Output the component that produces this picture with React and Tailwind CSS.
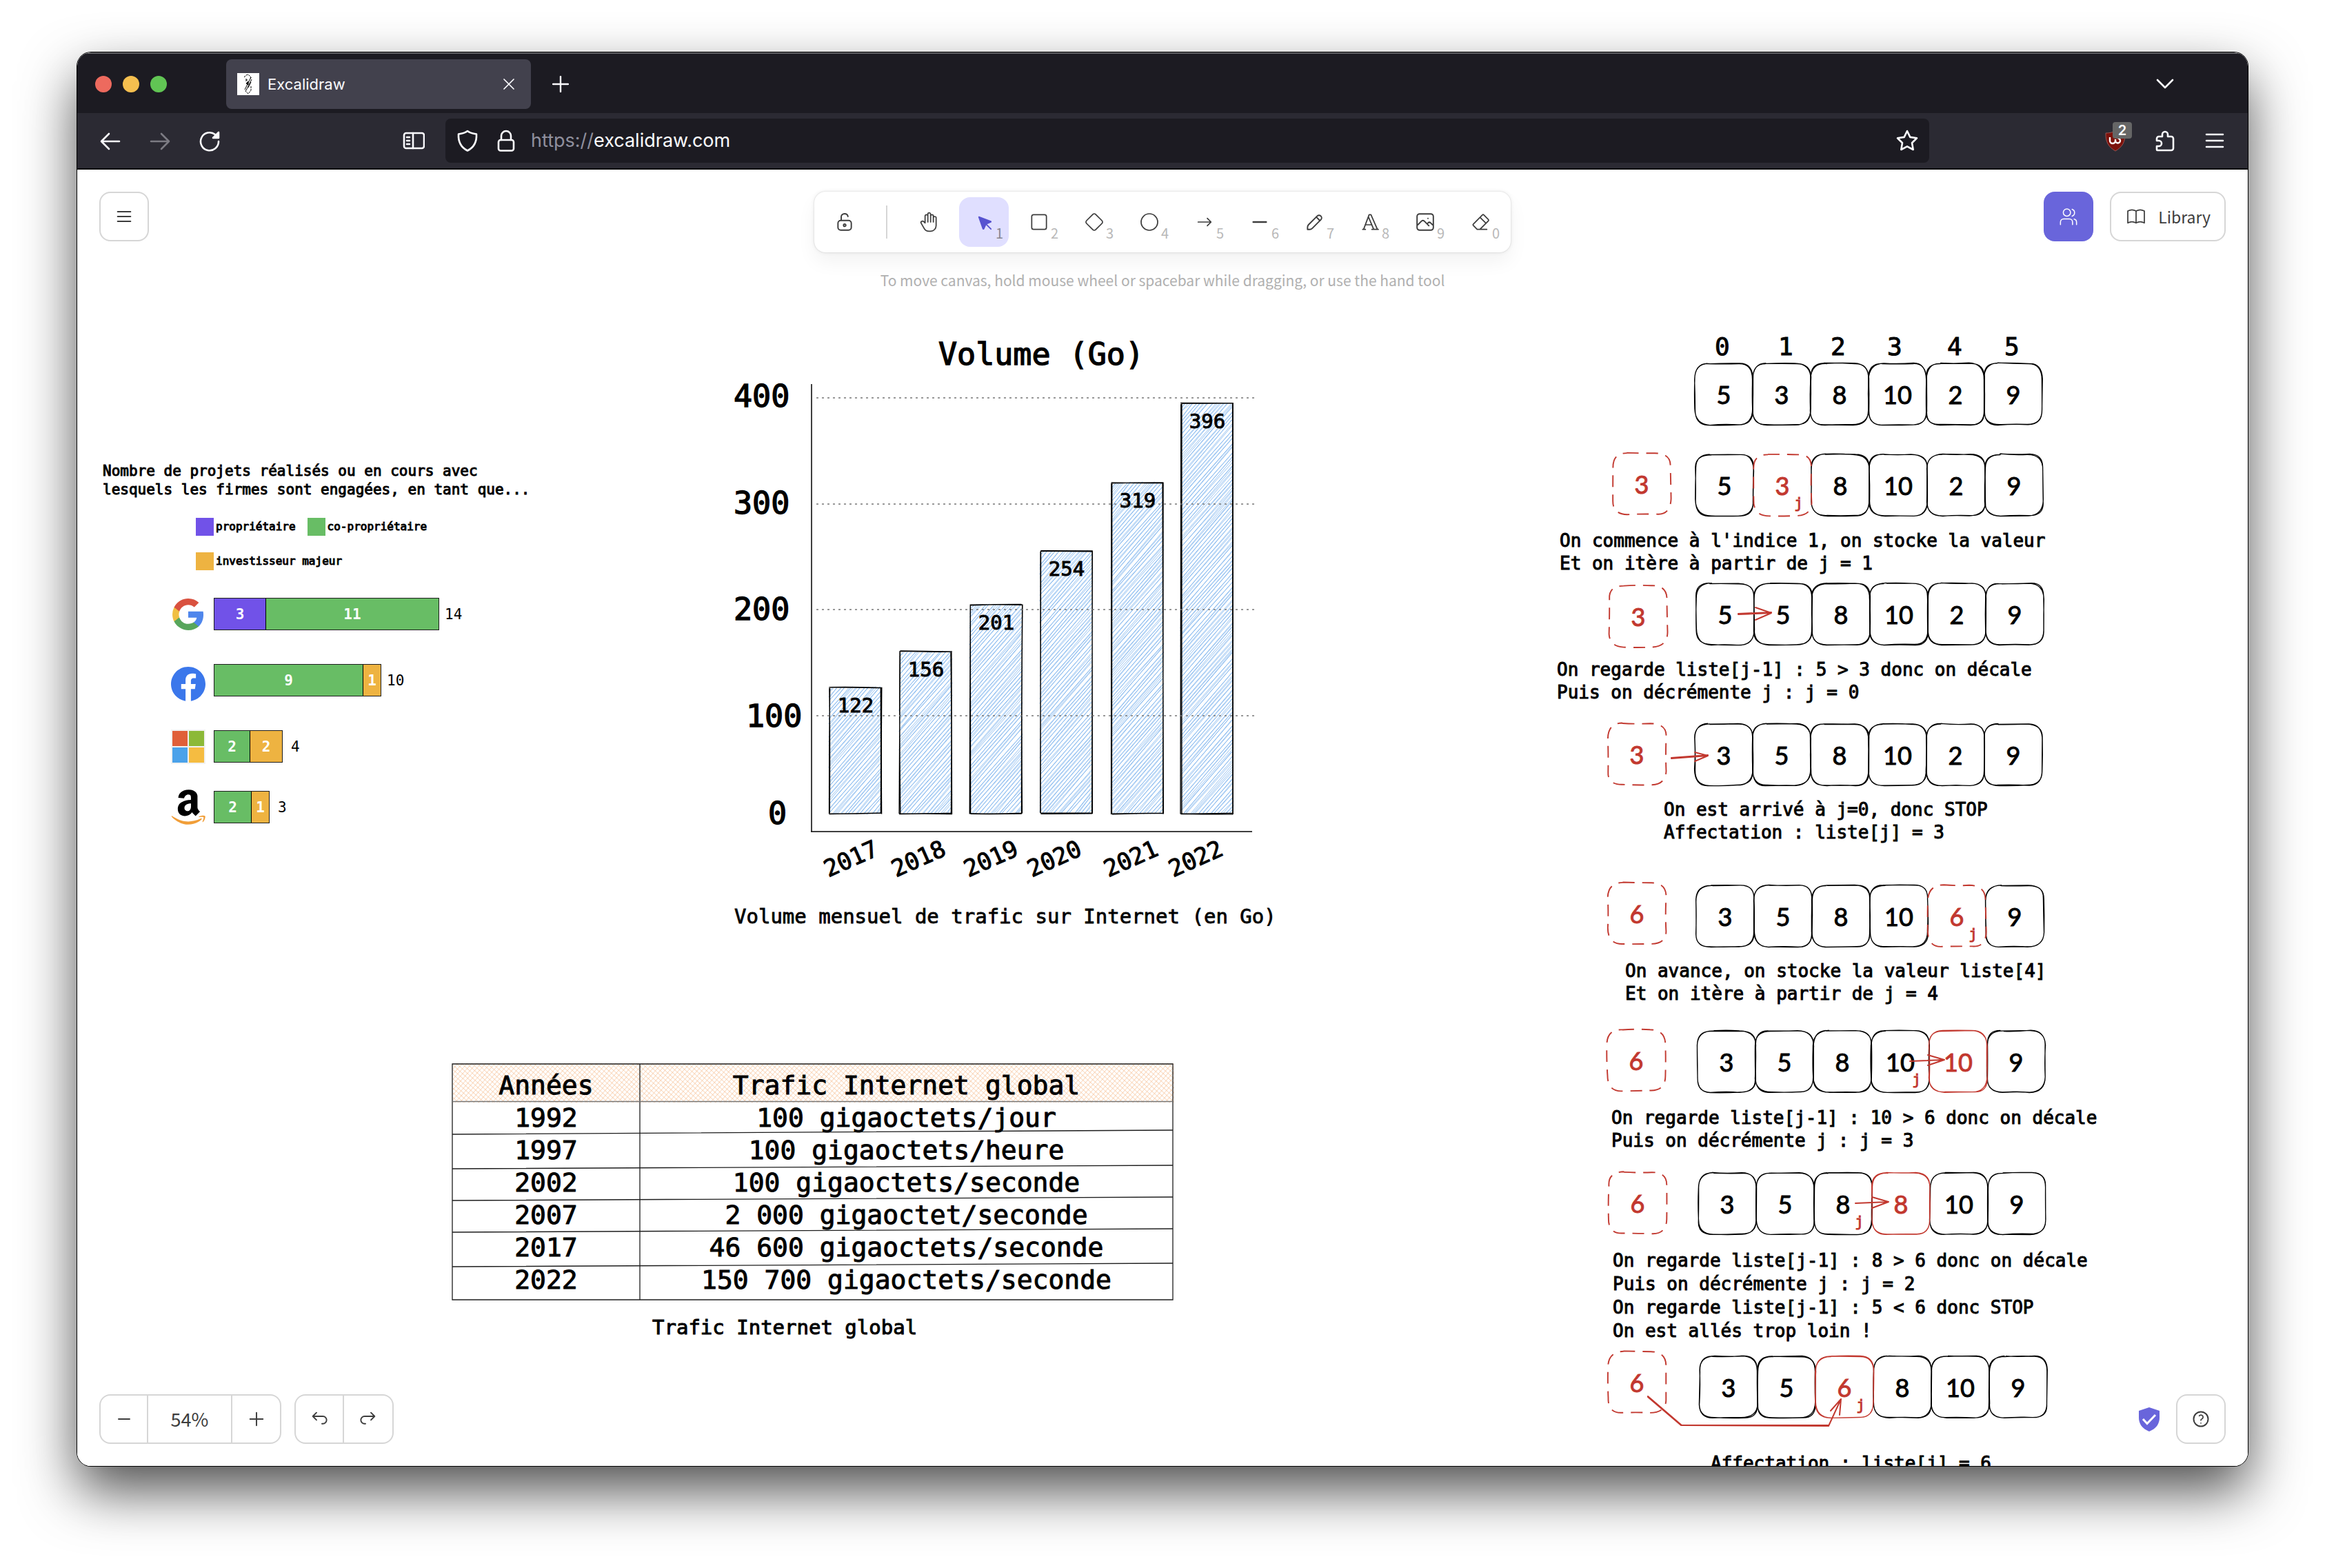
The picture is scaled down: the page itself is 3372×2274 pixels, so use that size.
import React from "react";

/* ---------- sketch helpers ---------- */

function makeRandom(seed) {
  let s = seed * 7919 + 17;
  return () => {
    s = (s * 16807 + 11) % 2147483647;
    return s / 2147483647;
  };
}

function sketchRoundedRect(w, h, r, seed, passes) {
  const rand = makeRandom(seed);
  const j = (a) => (rand() - 0.5) * 2 * a;
  const f = (n) => n.toFixed(1);
  let d = "";
  for (let p = 0; p < passes; p++) {
    const c = () => f(r + j(3));
    const a = c();
    d += `M${a} ${f(j(0.8))}`;
    d += `Q${f(w / 2)} ${f(j(1.4))} ${f(w - r + j(3))} ${f(j(0.8))}`;
    d += `Q${f(w + j(0.8))} ${f(j(0.8))} ${f(w + j(0.6))} ${f(r + j(3))}`;
    d += `Q${f(w + j(1.2))} ${f(h / 2)} ${f(w + j(0.6))} ${f(h - r + j(3))}`;
    d += `Q${f(w + j(0.8))} ${f(h + j(0.8))} ${f(w - r + j(3))} ${f(h + j(0.6))}`;
    d += `Q${f(w / 2)} ${f(h + j(1.4))} ${f(r + j(3))} ${f(h + j(0.6))}`;
    d += `Q${f(j(0.8))} ${f(h + j(0.8))} ${f(j(0.6))} ${f(h - r + j(3))}`;
    d += `Q${f(j(1.2))} ${f(h / 2)} ${f(j(0.6))} ${f(r + j(3))}`;
    d += `Q${f(j(0.8))} ${f(j(0.8))} ${a} ${f(j(0.8))}`;
  }
  return d;
}

function sketchRect(x, y, w, h, seed) {
  const rand = makeRandom(seed);
  const j = (a) => (rand() - 0.5) * 2 * a;
  const f = (n) => n.toFixed(1);
  const pts = [
    [x, y],
    [x + w, y],
    [x + w, y + h],
    [x, y + h],
  ];
  let d = "";
  for (let p = 0; p < 2; p++) {
    for (let i = 0; i < 4; i++) {
      const a = pts[i];
      const b = pts[(i + 1) % 4];
      d += `M${f(a[0] + j(1))} ${f(a[1] + j(1))}Q${f((a[0] + b[0]) / 2 + j(1))} ${f((a[1] + b[1]) / 2 + j(1))} ${f(b[0] + j(1))} ${f(b[1] + j(1))}`;
    }
  }
  return d;
}

function sketchHatch(x, y, w, h, gap, seed) {
  const rand = makeRandom(seed);
  const j = (a) => (rand() - 0.5) * 2 * a;
  const f = (n) => n.toFixed(1);
  const slope = 1.15;
  let d = "";
  for (let c = gap; c < h + w * slope; c += gap) {
    // line runs from the left or bottom edge up to the top or right edge
    let x1 = x;
    let y1 = y + c;
    if (y1 > y + h) {
      x1 = x + (y1 - (y + h)) / slope;
      y1 = y + h;
    }
    let x2 = x + c / slope;
    let y2 = y;
    if (x2 > x + w) {
      y2 = y + (x2 - (x + w)) * slope;
      x2 = x + w;
    }
    for (let p = 0; p < 2; p++) {
      d += `M${f(x1 + j(1.5))} ${f(y1 + j(1.5))}L${f(x2 + j(1.5))} ${f(y2 + j(1.5))}`;
    }
  }
  return d;
}

/* ---------- browser chrome ---------- */

function Glyph({ children, className = "size-8", stroke = 2.6 }) {
  return (
    <svg
      viewBox="0 0 32 32"
      className={className}
      fill="none"
      stroke="currentColor"
      strokeWidth={stroke}
      strokeLinecap="round"
      strokeLinejoin="round"
      aria-hidden="true"
    >
      {children}
    </svg>
  );
}

function TabBar() {
  return (
    <div className="flex h-[88px] items-center bg-[#1c1b22] pl-[26px] pr-[104px] text-[#fbfbfe]">
      <div className="flex gap-4">
        <button aria-label="Fermer la fenêtre" className="size-6 rounded-full bg-[#ed6a5e]" />
        <button aria-label="Réduire" className="size-6 rounded-full bg-[#f5bf4f]" />
        <button aria-label="Agrandir" className="size-6 rounded-full bg-[#61c554]" />
      </div>
      <div className="ml-[86px] flex h-[72px] w-[442px] items-center rounded-lg bg-[#42414d] pl-4 pr-6">
        <svg viewBox="0 0 32 32" className="size-8 bg-white" fill="none" stroke="#000" strokeWidth="1" aria-hidden="true">
          <path d="M10 6l3-3 3-1 4 4-1 3" strokeDasharray="3 1" />
          <path d="M20 6l-9 18M21 9l-8 16M20 13l-4 8M12 9h2v2h-2" />
          <path d="M13 15l3-3v5z" fill="#000" />
          <path d="M20 19v6l-4 5-4-4 1-2" strokeDasharray="3 1" />
        </svg>
        <span className="ml-3 flex-1 text-[22px] leading-7">Excalidraw</span>
        <button aria-label="Fermer l'onglet">
          <svg viewBox="0 0 16 16" className="size-4" stroke="currentColor" strokeWidth="1.7" strokeLinecap="round">
            <path d="M1 1l14 14M15 1L1 15" />
          </svg>
        </button>
      </div>
      <button aria-label="Nouvel onglet" className="ml-[31px]">
        <svg viewBox="0 0 24 24" className="size-6" stroke="currentColor" strokeWidth="2.4" strokeLinecap="round">
          <path d="M12 1v22M1 12h22" />
        </svg>
      </button>
      <button aria-label="Lister les onglets" className="ml-auto">
        <svg viewBox="0 0 32 32" className="size-8" fill="none" stroke="currentColor" strokeWidth="2.6" strokeLinecap="round" strokeLinejoin="round">
          <path d="M5 10l11 11 11-11" />
        </svg>
      </button>
    </div>
  );
}

function NavBar() {
  return (
    <div className="flex h-[82px] items-center border-b-2 border-[#0c0c0d] bg-[#2b2a33] pl-8 pr-8 text-[#fbfbfe]">
      <div className="flex gap-10">
        <button aria-label="Page précédente">
          <Glyph>
            <path d="M29 17H3M14 6L3 17l11 11" />
          </Glyph>
        </button>
        <button aria-label="Page suivante" className="text-[#7c7b83]">
          <Glyph>
            <path d="M3 17h26M18 6l11 11-11 11" />
          </Glyph>
        </button>
        <button aria-label="Actualiser">
          <Glyph>
            <path d="M29 17a13 13 0 1 1-5-10" />
            <path d="M29 4v8h-8z" fill="currentColor" />
          </Glyph>
        </button>
      </div>
      <button aria-label="Panneau latéral" className="ml-[264px]">
        <Glyph>
          <rect x="2" y="5" width="29" height="22" rx="3" />
          <path d="M15 5v22M6 11h4M6 16h4M6 21h4" />
        </Glyph>
      </button>
      <div className="ml-[30px] flex h-16 flex-1 items-center rounded-lg bg-[#1c1b22] pl-4 pr-4">
        <button aria-label="Protection">
          <Glyph>
            <path d="M16 2c4 3 9 4 13 4.500 .6 11-3 19-13 24C6 25.500 2.400 17.500 3 6.500 7 6 12 5 16 2z" />
          </Glyph>
        </button>
        <button aria-label="Connexion sécurisée" className="ml-6">
          <Glyph>
            <rect x="5" y="15" width="22" height="15.500" rx="3" />
            <path d="M9 15V9a7 7 0 0 1 14 0v6" />
          </Glyph>
        </button>
        <label htmlFor="url" className="ml-5 text-[27px] leading-8 text-[#8f8f9d]">
          https://
        </label>
        <input
          id="url"
          defaultValue="excalidraw.com"
          className="min-w-0 flex-1 bg-transparent text-[27px] leading-8 text-[#fbfbfe] outline-none"
        />
        <button aria-label="Marquer cette page">
          <Glyph>
            <path d="M16 2l4.300 8.900 9.700 1.400-7 6.900 1.700 9.800L16 24.400 7.300 29 9 19.200 2 12.300l9.700-1.400z" />
          </Glyph>
        </button>
      </div>
      <div className="ml-[254px] flex items-center gap-10">
        <button aria-label="uBlock Origin" className="relative">
          <svg viewBox="0 0 32 32" className="size-8" aria-hidden="true">
            <path d="M16 2c4 2 9 3 14 3 .5 13-4 20-14 26C6 25 1.500 18 2 5c5 0 10-1 14-3z" fill="#7c120c" stroke="#a7635f" strokeWidth=".8" />
            <path d="M8 11v5a4 4 0 0 0 8 0v-2m0 2a3.500 3.500 0 1 0 3.500-3.500" fill="none" stroke="#fff" strokeWidth="2.400" />
          </svg>
          <span className="absolute -top-[11px] left-3 flex h-6 w-7 items-center justify-center rounded-sm bg-[#666] text-[20px] font-semibold leading-6 text-white">
            2
          </span>
        </button>
        <button aria-label="Extensions">
          <Glyph>
            <path d="M5 30h20a3 3 0 0 0 3-3V13a3 3 0 0 0-3-3h-5V7a4 4 0 0 0-8 0v3H7a3 3 0 0 0-3 3v3h3a4 4 0 0 1 0 8H4v5a1 1 0 0 0 1 1z" />
          </Glyph>
        </button>
        <button aria-label="Menu de Firefox">
          <Glyph>
            <path d="M4 7h24M4 16h24M4 25h24" />
          </Glyph>
        </button>
      </div>
    </div>
  );
}

/* ---------- editor controls ---------- */

const icon24 = { viewBox: "0 0 24 24", width: 1.3 };
const icon20 = { viewBox: "0 0 20 20", width: 1.2 };

function Icon({ kind = icon24, className = "size-8", children }) {
  return (
    <svg
      viewBox={kind.viewBox}
      className={className}
      fill="none"
      stroke="currentColor"
      strokeWidth={kind.width}
      strokeLinecap="round"
      strokeLinejoin="round"
      aria-hidden="true"
    >
      {children}
    </svg>
  );
}

const tools = [
  {
    label: "Main",
    icon: (
      <Icon>
        <path d="M8 13v-7.500a1.500 1.500 0 0 1 3 0v6.500M11 5.500v-2a1.500 1.500 0 1 1 3 0v8.500M14 5.500a1.500 1.500 0 0 1 3 0v6.500M17 7.500a1.500 1.500 0 0 1 3 0v8.500a6 6 0 0 1-6 6h-2h.208a6 6 0 0 1-5.012-2.700a69.740 69.740 0 0 1-.196-.3c-.312-.479-1.407-2.388-3.286-5.728a1.500 1.500 0 0 1 .536-2.022a1.867 1.867 0 0 1 2.280.28l1.470 1.470" />
      </Icon>
    ),
  },
  {
    label: "Sélection",
    num: "1",
    active: true,
    icon: (
      <svg viewBox="0 0 22 22" className="size-8" fill="currentColor" stroke="currentColor" strokeWidth="1.250" strokeLinecap="round" strokeLinejoin="round" aria-hidden="true">
        <path d="M6 6l4.153 11.793a.365.365 0 0 0 .331.207a.366.366 0 0 0 .332-.207l2.184-4.793l4.787-1.994a.355.355 0 0 0 .213-.323a.355.355 0 0 0-.213-.323z" />
        <path d="M13.500 13.500l4.500 4.500" />
      </svg>
    ),
  },
  { label: "Rectangle", num: "2", icon: <Icon><rect x="4" y="4" width="16" height="16" rx="2" /></Icon> },
  {
    label: "Losange",
    num: "3",
    icon: (
      <Icon>
        <path d="M10.500 20.400l-6.900-6.900c-.781-.781-.781-2.219 0-3l6.900-6.900c.781-.781 2.219-.781 3 0l6.900 6.900c.781.781.781 2.219 0 3l-6.900 6.900c-.781.781-2.219.781-3 0z" />
      </Icon>
    ),
  },
  { label: "Ellipse", num: "4", icon: <Icon><circle cx="12" cy="12" r="9" /></Icon> },
  { label: "Flèche", num: "5", icon: <Icon><path d="M5 12h14M15 16l4-4M15 8l4 4" /></Icon> },
  { label: "Ligne", num: "6", icon: <Icon kind={icon20}><path d="M4.167 10h11.666" strokeWidth="1.500" /></Icon> },
  {
    label: "Dessiner",
    num: "7",
    icon: (
      <Icon kind={icon20}>
        <path d="m7.643 15.690 7.774-7.773a2.357 2.357 0 1 0-3.334-3.334L4.310 12.357a3.333 3.333 0 0 0-.977 2.357v1.953h1.953c.884 0 1.732-.352 2.357-.977Z" />
        <path d="m11.250 5.417 3.333 3.333" />
      </Icon>
    ),
  },
  {
    label: "Texte",
    num: "8",
    icon: (
      <Icon>
        <path d="M4 20h3M14 20h7M6.900 15h6.900M10.200 6.300L16 20M5 20L11 4h2l7 16" />
      </Icon>
    ),
  },
  {
    label: "Image",
    num: "9",
    icon: (
      <Icon kind={icon20}>
        <path d="M12.500 6.667h.01M4.910 2.625h10.180a2.284 2.284 0 0 1 2.285 2.284v10.182a2.284 2.284 0 0 1-2.284 2.284H4.909a2.284 2.284 0 0 1-2.284-2.284V4.909a2.284 2.284 0 0 1 2.284-2.284Z" />
        <path d="m3.333 12.500 3.334-3.333c.773-.745 1.726-.745 2.500 0l4.166 4.166M11.667 11.667l.833-.834c.774-.744 1.726-.744 2.500 0l1.667 1.667" />
      </Icon>
    ),
  },
  {
    label: "Gomme",
    num: "0",
    icon: (
      <Icon>
        <path d="M19 20h-10.500l-4.210-4.300a1 1 0 0 1 0-1.410l10-10a1 1 0 0 1 1.410 0l5 5a1 1 0 0 1 0 1.410l-9.200 9.300M18 13.300l-6.300-6.300" />
      </Icon>
    ),
  },
];

function ToolBar() {
  return (
    <div className="flex flex-col items-center">
      <div className="flex items-center rounded-2xl bg-white p-2 shadow-[0_14px_28px_rgba(0,0,0,0.05),0_0_6px_rgba(0,0,0,0.08),0_0_2px_rgba(0,0,0,0.17)]">
        <button aria-label="Verrouiller l'outil" className="flex size-[72px] items-center justify-center rounded-2xl">
          <Icon kind={icon20}>
            <path d="M13.542 8.542H6.458a2.500 2.500 0 0 0-2.500 2.500v3.750a2.500 2.500 0 0 0 2.500 2.500h7.084a2.500 2.500 0 0 0 2.500-2.500v-3.750a2.500 2.500 0 0 0-2.500-2.500Z" />
            <path d="M10 13.958a1.042 1.042 0 1 0 0-2.083 1.042 1.042 0 0 0 0 2.083Z" />
            <path d="M6.900 8.333V5.200C6.900 3.700 8.200 2.500 9.900 2.500c1.700 0 2.900 1.100 3.100 2.500" />
          </Icon>
        </button>
        <span className="mx-6 h-12 w-0.5 bg-[#d6d6d6]" />
        <div className="flex gap-2">
          {tools.map((t) => (
            <button
              key={t.label}
              aria-label={t.label}
              aria-pressed={!!t.active}
              className={
                t.active
                  ? "relative flex size-[72px] items-center justify-center rounded-2xl bg-[#e0dfff] text-[#5753d0]"
                  : "relative flex size-[72px] items-center justify-center rounded-2xl"
              }
            >
              {t.icon}
              {t.num && (
                <span className={t.active ? "absolute bottom-2 right-2 text-[20px] leading-6 text-[#87868f]" : "absolute bottom-2 right-2 text-[20px] leading-6 text-[#b8b8b8]"}>
                  {t.num}
                </span>
              )}
            </button>
          ))}
        </div>
      </div>
      <p className="mt-[22px] whitespace-nowrap text-[21px] leading-9 text-[#b0b0b0]">
        To move canvas, hold mouse wheel or spacebar while dragging, or use the hand tool
      </p>
    </div>
  );
}

function EditorControls() {
  return (
    <div className="relative flex flex-1 flex-col justify-between p-8 font-['Noto_Sans_CJK_SC',sans-serif] text-[#3d3d3d]">
      <div className="grid grid-cols-[1fr_auto_1fr] items-start">
        <button aria-label="Menu" className="flex size-[72px] items-center justify-center rounded-2xl border-2 border-[#d6d6d6] bg-white">
          <Icon kind={icon24} className="size-7">
            <path d="M4 6h16M4 12h16M4 18h16" strokeWidth="1.700" />
          </Icon>
        </button>
        <ToolBar />
        <div className="flex justify-end gap-6">
          <button aria-label="Collaboration" className="flex size-[72px] items-center justify-center rounded-2xl bg-[#6965db] text-white">
            <Icon className="size-7">
              <circle cx="10" cy="7" r="4.500" />
              <path d="M2 22v-3a4 4 0 0 1 4-4h7a4 4 0 0 1 4 4v3M16.500 3a4.500 4.500 0 0 1 0 8.500M22 22v-3a4 4 0 0 0-3-3.850" />
            </Icon>
          </button>
          <button className="flex h-[72px] items-center gap-4 rounded-2xl border-2 border-[#d6d6d6] bg-white px-5 text-[23px] leading-9">
            <Icon className="size-8">
              <path d="M3 19a9 9 0 0 1 9 0a9 9 0 0 1 9 0M3 6a9 9 0 0 1 9 0a9 9 0 0 1 9 0M3 6v13M12 6v13M21 6v13" />
            </Icon>
            Library
          </button>
        </div>
      </div>

      <div className="flex items-center">
        <div className="flex h-[72px] divide-x-2 divide-[#d6d6d6] rounded-2xl border-2 border-[#d6d6d6] bg-white text-[27px]">
          <button aria-label="Dézoomer" className="flex w-[69px] items-center justify-center">
            <Icon kind={icon20}>
              <path d="M5 10h10" />
            </Icon>
          </button>
          <button aria-label="Réinitialiser le zoom" className="flex w-[122px] items-center justify-center leading-9">
            54%
          </button>
          <button aria-label="Zoomer" className="flex w-[69px] items-center justify-center">
            <Icon kind={icon20}>
              <path d="M10 4.200v11.600M4.200 10h11.600" />
            </Icon>
          </button>
        </div>
        <div className="ml-[19px] flex h-[72px] divide-x-2 divide-[#d6d6d6] rounded-2xl border-2 border-[#d6d6d6] bg-white">
          <button aria-label="Annuler" className="flex w-[70px] items-center justify-center">
            <Icon kind={icon20}>
              <path d="M7.500 10.833L4.167 7.500L7.500 4.167M4.167 7.500h9.166a3.333 3.333 0 0 1 0 6.667H12.500" />
            </Icon>
          </button>
          <button aria-label="Rétablir" className="flex w-[70px] items-center justify-center">
            <Icon kind={icon20}>
              <path d="M12.500 10.833L15.833 7.500L12.500 4.167M15.833 7.500H6.667a3.333 3.333 0 1 0 0 6.667H7.500" />
            </Icon>
          </button>
        </div>
        <div className="ml-auto flex items-center gap-6">
          <a href="#chiffrement" aria-label="Chiffrement de bout en bout">
            <svg viewBox="0 0 30 35" className="h-[35px] w-[30px]" aria-hidden="true">
              <path d="M15 0l15 5v10c0 9-5 16-15 20C5 31 0 24 0 15V5z" fill="#6965db" />
              <path d="M6 17l6 6.500L24 11" fill="none" stroke="#fff" strokeWidth="3" />
            </svg>
          </a>
          <button aria-label="Aide" className="flex size-[72px] items-center justify-center rounded-2xl border-2 border-[#d6d6d6] bg-white">
            <Icon className="size-7">
              <circle cx="12" cy="12" r="9" strokeWidth="1.700" />
              <path d="M12 17v.01M12 13.500a1.500 1.500 0 0 1 1-1.500a2.600 2.600 0 1 0-3-4" strokeWidth="1.500" />
            </Icon>
          </button>
        </div>
      </div>
    </div>
  );
}

/* ---------- projects chart ---------- */

function GoogleLogo() {
  return (
    <svg viewBox="0.500 0.500 23 23" className="size-12" aria-label="Google">
      <path fill="#4f86ec" d="M22.560 12.250c0-.78-.07-1.530-.2-2.250H12v4.260h5.920a5.060 5.060 0 0 1-2.200 3.320v2.770h3.570c2.080-1.920 3.270-4.740 3.270-8.100z" />
      <path fill="#58a65c" d="M12 23c2.970 0 5.460-.98 7.280-2.660l-3.570-2.770c-.98.660-2.230 1.060-3.710 1.060-2.860 0-5.290-1.930-6.160-4.530H2.180v2.840C3.990 20.530 7.700 23 12 23z" />
      <path fill="#f1bf42" d="M5.840 14.090A6.600 6.600 0 0 1 5.490 12c0-.73.130-1.430.350-2.090V7.070H2.180A11 11 0 0 0 1 12c0 1.780.430 3.450 1.180 4.930z" />
      <path fill="#d9513f" d="M12 5.380c1.620 0 3.060.560 4.210 1.640l3.150-3.150C17.450 2.090 14.970 1 12 1 7.700 1 3.990 3.470 2.180 7.070l3.660 2.840c.870-2.600 3.300-4.530 6.160-4.530z" />
    </svg>
  );
}

function FacebookLogo() {
  return (
    <svg viewBox="8 8 496 496" className="mt-2.5 size-[50px]" aria-label="Facebook">
      <path fill="#3b77eb" d="M504 256C504 119 393 8 256 8S8 119 8 256c0 123.780 90.690 226.380 209.250 245V327.690h-63V256h63v-54.640c0-62.150 37-96.480 93.670-96.480 27.140 0 55.520 4.840 55.520 4.840v61h-31.280c-30.800 0-40.410 19.120-40.410 38.730V256h68.780l-11 71.690h-57.780V501C413.310 482.380 504 379.780 504 256z" />
    </svg>
  );
}

function MicrosoftLogo() {
  return (
    <svg viewBox="0 0 50 50" className="size-[50px]" aria-label="Microsoft">
      <path fill="#f1f1f1" d="M0 0h50v50H0z" />
      <path fill="#e05f39" d="M2 2h22v22H2z" />
      <path fill="#8cb938" d="M26 2h22v22H26z" />
      <path fill="#4ba2ea" d="M2 26h22v22H2z" />
      <path fill="#f5bc41" d="M26 26h22v22H26z" />
    </svg>
  );
}

function AmazonLogo() {
  return (
    <svg viewBox="5 30 434 452" className="size-[51px]" aria-label="Amazon">
      <path d="M257.200 162.700c-48.700 1.800-169.500 15.500-169.500 117.500 0 109.500 138.300 114 183.500 43.200 6.500 10.200 35.400 37.500 45.300 46.800l56.800-56S341 288.900 341 261.400V114.300C341 89 316.500 32 228.700 32 140.700 32 94 87 94 136.300l73.500 6.800c16.300-49.500 54.200-49.500 54.200-49.500 40.700-.1 35.500 29.800 35.500 69.100zm0 86.800c0 80-84.200 68-84.200 17.200 0-47.200 50.500-56.700 84.200-57.800v40.600z" />
      <path fill="#f19e38" d="M393.200 413c-7.700 10-70 67-174.500 67S34.200 408.500 9.700 379c-6.800-7.700 1-11.300 5.500-8.300C88.500 415.200 203 488.500 387.700 401c7.500-3.700 13.300 2 5.500 12zm39.800 2.200c-6.500 15.800-16 26.800-21.200 31-5.500 4.500-9.500 2.700-6.500-3.800s19.300-46.500 12.700-55c-6.500-8.300-37-4.300-48-3.200-10.800 1-13 2-14-.3-2.300-5.700 21.700-15.500 37.500-17.500 15.700-1.800 41-.8 46 5.700 3.700 5.100 0 27.100-6.500 43.100z" />
    </svg>
  );
}

const purple = "bg-[#7152e8]";
const green = "bg-[#68bd65]";
const orange = "bg-[#eeb341]";

const firms = [
  { logo: <GoogleLogo />, total: "14", gap: "ml-2", mt: "", parts: [["3", purple, 75], ["11", green, 250]] },
  { logo: <FacebookLogo />, total: "10", gap: "ml-2", mt: "mt-[45px]", parts: [["9", green, 216], ["1", orange, 25]] },
  { logo: <MicrosoftLogo />, total: "4", gap: "ml-3", mt: "mt-[45px]", parts: [["2", green, 52], ["2", orange, 46]] },
  { logo: <AmazonLogo />, total: "3", gap: "ml-3", mt: "mt-[37px]", parts: [["2", green, 54], ["1", orange, 25]] },
];

function Legend({ color, children }) {
  return (
    <div className="flex items-center gap-[3px] text-[16px] leading-6">
      <span className={color + " size-[26px]"} />
      {children}
    </div>
  );
}

function ProjectsChart() {
  return (
    <div className="absolute left-[37px] top-[424px] whitespace-pre">
      <p className="text-[21px] leading-[27px]">{"Nombre de projets réalisés ou en cours avec\nlesquels les firmes sont engagées, en tant que..."}</p>
      <div className="ml-[135px] mt-[27px] flex flex-col gap-6">
        <div className="flex gap-[17px]">
          <Legend color={purple}>propriétaire</Legend>
          <Legend color={green}>co-propriétaire</Legend>
        </div>
        <Legend color={orange}>investisseur majeur</Legend>
      </div>
      <div className="ml-[99px] mt-[38px] text-[21px] leading-6 [-webkit-text-stroke:0px]">
        {firms.map((f) => (
          <div key={f.total} className={"flex h-[51px] items-center " + f.mt}>
            <div className="flex w-[50px] justify-center">{f.logo}</div>
            <div className="ml-3 flex h-[47px] divide-x divide-black border border-[#1e1e1e] font-bold text-white">
              {f.parts.map(([n, color, width], i) => (
                <span key={i} className={"flex items-center justify-center " + color} style={{ width }}>
                  {n}
                </span>
              ))}
            </div>
            <span className={f.gap}>{f.total}</span>
          </div>
        ))}
      </div>
    </div>
  );
}

/* ---------- volume chart ---------- */

const bars = [
  { x: 143, y: 517, v: "122", year: "2017", yx: 174 },
  { x: 245, y: 465, v: "156", year: "2018", yx: 272 },
  { x: 347, y: 397, v: "201", year: "2019", yx: 377 },
  { x: 449, y: 319, v: "254", year: "2020", yx: 469 },
  { x: 552, y: 220, v: "319", year: "2021", yx: 580 },
  { x: 653, y: 105, v: "396", year: "2022", yx: 674 },
];

const ticks = [
  ["400", 4, 110],
  ["300", 4, 265],
  ["200", 4, 419],
  ["100", 22, 574],
  ["0", 54, 715],
];

function VolumeChart() {
  return (
    <svg className="absolute left-[948px] top-[234px] h-[880px] w-[840px]" viewBox="0 0 840 880">
      <g stroke="#000" strokeWidth="1.400" className="text-[45px]">
        <text x="301" y="49">Volume (Go)</text>
        {ticks.map(([t, x, y]) => (
          <text key={t} x={x} y={y}>{t}</text>
        ))}
      </g>
      {bars.map((b, i) => (
        <g key={b.v} fill="none">
          <path d={sketchHatch(b.x, b.y, 75, 700 - b.y, 6.5, i + 3)} stroke="#7db4ee" strokeWidth="0.8" />
          <path d={sketchRect(b.x, b.y, 75, 700 - b.y, i + 11)} stroke="#000" strokeWidth="1.4" />
        </g>
      ))}
      <path d="M124 97H760M124 251H762M124 404H760M124 558H762" stroke="#777" strokeWidth="1.500" strokeDasharray="3 5" />
      <path d="M117 77V726M116 726H756" stroke="#000" strokeWidth="1.500" />
      <g stroke="#000" strokeWidth="1">
        {bars.map((b) => (
          <g key={b.year} textAnchor="middle">
            <text x={b.x + 38} y={b.y + 36} className="text-[29px]">{b.v}</text>
            <text x={b.yx} y="777" transform={`rotate(-24 ${b.yx} 765)`} className="text-[34px]">{b.year}</text>
          </g>
        ))}
        <text x="5" y="859" className="text-[29px]" strokeWidth="0.800">Volume mensuel de trafic sur Internet (en Go)</text>
      </g>
    </svg>
  );
}

/* ---------- traffic table ---------- */

const traffic = [
  ["1992", "100 gigaoctets/jour"],
  ["1997", "100 gigaoctets/heure"],
  ["2002", "100 gigaoctets/seconde"],
  ["2007", "2 000 gigaoctet/seconde"],
  ["2017", "46 600 gigaoctets/seconde"],
  ["2022", "150 700 gigaoctets/seconde"],
];

function TrafficTable() {
  return (
    <div className="absolute left-[544px] top-[1297px] w-[1045px]">
      <svg className="absolute left-0 top-0 h-[343px] w-[1045px] overflow-visible" viewBox="0 0 1045 343" fill="none" aria-hidden="true">
        <defs>
          <pattern id="crosshatch" width="5" height="5" patternUnits="userSpaceOnUse" patternTransform="rotate(42)">
            <path d="M0 0H5M0 0V5" stroke="#f6b885" strokeWidth="1" />
          </pattern>
        </defs>
        <rect x="1" y="-1" width="1046" height="57" fill="url(#crosshatch)" />
        <g stroke="#1e1e1e" strokeWidth="1.300">
          <path d="M0 0H1045V342H0zM272 0V342" />
          <path d="M0 54.500H1045" stroke="#777" />
          <path d="M0 102L1045 96M0 152L1045 147M0 198L1045 193M0 244L1045 239M0 294L1045 289" />
        </g>
      </svg>
      <table className="relative w-full table-fixed border-collapse text-center text-[38px] leading-[47px]">
        <thead>
          <tr>
            <th className="w-[272px] p-0 pt-2 font-normal">Années</th>
            <th className="p-0 pt-2 font-normal">Trafic Internet global</th>
          </tr>
        </thead>
        <tbody>
          {traffic.map(([y, t]) => (
            <tr key={y}>
              <td className="p-0">{y}</td>
              <td className="p-0">{t}</td>
            </tr>
          ))}
        </tbody>
      </table>
      <p className="ml-[290px] mt-[27px] text-[29px] leading-9">Trafic Internet global</p>
    </div>
  );
}

/* ---------- insertion sort ---------- */

function Cell({ value, kind = "plain", seed, mark, className = "relative" }) {
  const red = kind !== "plain";
  return (
    <div
      className={
        (red ? "z-10 text-[#c2382f] " : "text-black ") +
        "flex h-[89px] w-[84px] items-center justify-center font-['Lato',sans-serif] text-[36px] leading-10 " +
        className
      }
    >
      <svg className="absolute inset-0 h-full w-full overflow-visible" viewBox="0 0 84 89" fill="none" stroke="currentColor" aria-hidden="true">
        {kind === "dashed" ? (
          <path d={sketchRoundedRect(84, 89, 21, seed, 1)} strokeWidth="1.900" strokeDasharray="17 11" />
        ) : (
          <path d={sketchRoundedRect(84, 89, 21, seed, 2)} strokeWidth="1.300" />
        )}
      </svg>
      {value}
      {mark && (
        <span className="absolute bottom-1 right-3 font-['DejaVu_Sans_Mono',monospace] text-[21px] leading-7 text-[#c2382f]">j</span>
      )}
    </div>
  );
}

const steps = [
  { row: "left-[2346px] top-[281px]", values: [5, 3, 8, 10, 2, 9] },
  {
    row: "left-[2347px] top-[413px]",
    values: [5, 3, 8, 10, 2, 9],
    red: 1,
    redKind: "dashed",
    mark: 1,
    keyValue: 3,
    keyPos: "absolute left-[2227px] top-[411px]",
    textPos: "left-[2150px] top-[522px] leading-[33px]",
    text: "On commence à l'indice 1, on stocke la valeur\nEt on itère à partir de j = 1",
  },
  {
    row: "left-[2348px] top-[600px]",
    values: [5, 5, 8, 10, 2, 9],
    keyValue: 3,
    keyPos: "absolute left-[2222px] top-[603px]",
    textPos: "left-[2146px] top-[709px] leading-[33px]",
    text: "On regarde liste[j-1] : 5 > 3 donc on décale\nPuis on décrémente j : j = 0",
  },
  {
    row: "left-[2346px] top-[804px]",
    values: [3, 5, 8, 10, 2, 9],
    keyValue: 3,
    keyPos: "absolute left-[2220px] top-[803px]",
    textPos: "left-[2301px] top-[912px] leading-[33px]",
    text: "On est arrivé à j=0, donc STOP\nAffectation : liste[j] = 3",
  },
  {
    row: "left-[2348px] top-[1038px]",
    values: [3, 5, 8, 10, 6, 9],
    red: 4,
    redKind: "dashed",
    mark: 4,
    keyValue: 6,
    keyPos: "absolute left-[2220px] top-[1034px]",
    textPos: "left-[2245px] top-[1146px] leading-[33px]",
    text: "On avance, on stocke la valeur liste[4]\nEt on itère à partir de j = 4",
  },
  {
    row: "left-[2350px] top-[1249px]",
    values: [3, 5, 8, 10, 10, 9],
    red: 4,
    redKind: "solid",
    mark: 3,
    keyValue: 6,
    keyPos: "absolute left-[2219px] top-[1247px]",
    textPos: "left-[2225px] top-[1359px] leading-[33px]",
    text: "On regarde liste[j-1] : 10 > 6 donc on décale\nPuis on décrémente j : j = 3",
  },
  {
    row: "left-[2351px] top-[1455px]",
    values: [3, 5, 8, 8, 10, 9],
    red: 3,
    redKind: "solid",
    mark: 2,
    keyValue: 6,
    keyPos: "absolute left-[2221px] top-[1454px]",
    textPos: "left-[2227px] top-[1565px] leading-[34px]",
    text: "On regarde liste[j-1] : 8 > 6 donc on décale\nPuis on décrémente j : j = 2\nOn regarde liste[j-1] : 5 < 6 donc STOP\nOn est allés trop loin !",
  },
  {
    row: "left-[2353px] top-[1721px]",
    values: [3, 5, 6, 8, 10, 9],
    red: 2,
    redKind: "solid",
    mark: 2,
    keyValue: 6,
    keyPos: "absolute left-[2220px] top-[1714px]",
    textPos: "left-[2369px] top-[1860px] leading-[33px]",
    text: "Affectation : liste[j] = 6",
  },
];

const indexes = ["left-[2375px]", "left-[2467px]", "left-[2543px]", "left-[2625px]", "left-[2712px]", "left-[2795px]"];

function SortSteps() {
  return (
    <>
      {indexes.map((pos, i) => (
        <span key={pos} className={"absolute top-[237px] text-[36px] leading-10 " + pos}>
          {i}
        </span>
      ))}
      {steps.map((s, i) => (
        <React.Fragment key={s.row}>
          {s.keyValue && <Cell value={s.keyValue} kind="dashed" seed={i + 70} className={s.keyPos} />}
          <div className={"absolute flex " + s.row}>
            {s.values.map((v, k) => (
              <Cell key={k} value={v} kind={s.red === k ? s.redKind : "plain"} mark={s.mark === k} seed={i * 6 + k + 1} />
            ))}
          </div>
          {s.text && <p className={"absolute whitespace-pre text-[26px] " + s.textPos}>{s.text}</p>}
        </React.Fragment>
      ))}
      <svg
        className="absolute left-[2220px] top-[600px] z-20 h-[1280px] w-[700px]"
        viewBox="2220 600 700 1280"
        fill="none"
        stroke="#c2382f"
        strokeWidth="2"
        strokeLinecap="round"
        strokeLinejoin="round"
        aria-hidden="true"
      >
        <path d="M2409 645L2457 643M2409 644L2457 642M2434 635L2457 643L2434 653" />
        <path d="M2312 854L2365 850M2312 853L2365 849M2346 845L2365 850L2346 858" />
        <path d="M2658 1293L2708 1291M2684 1284L2708 1291L2684 1299" />
        <path d="M2579 1499L2627 1497M2603 1490L2627 1497L2603 1506" />
        <path d="M2278 1779L2327 1821L2540 1822L2558 1783M2278 1780L2326 1821L2540 1821M2543 1800L2558 1783L2556 1806" />
      </svg>
    </>
  );
}

export default function App() {
  return (
    <div className="flex min-h-screen flex-col bg-white px-28 pb-[148px] pt-[76px] font-['Inter',sans-serif]">
      <main className="flex flex-1 flex-col rounded-[20px] shadow-[0_0_0_1px_#000,0_36px_80px_rgba(0,0,0,0.69)]">
        <div className="flex flex-1 flex-col overflow-hidden rounded-[20px] bg-white">
          <header className="-mb-0.5 border-t-2 border-[#5f5f63]">
            <TabBar />
          </header>
          <NavBar />
          <div className="relative flex flex-1 flex-col overflow-hidden bg-white">
            <div className="absolute inset-0 overflow-hidden font-['DejaVu_Sans_Mono',monospace] text-black [-webkit-text-stroke:1px]">
              <ProjectsChart />
              <VolumeChart />
              <TrafficTable />
              <SortSteps />
            </div>
            <EditorControls />
          </div>
        </div>
      </main>
    </div>
  );
}
